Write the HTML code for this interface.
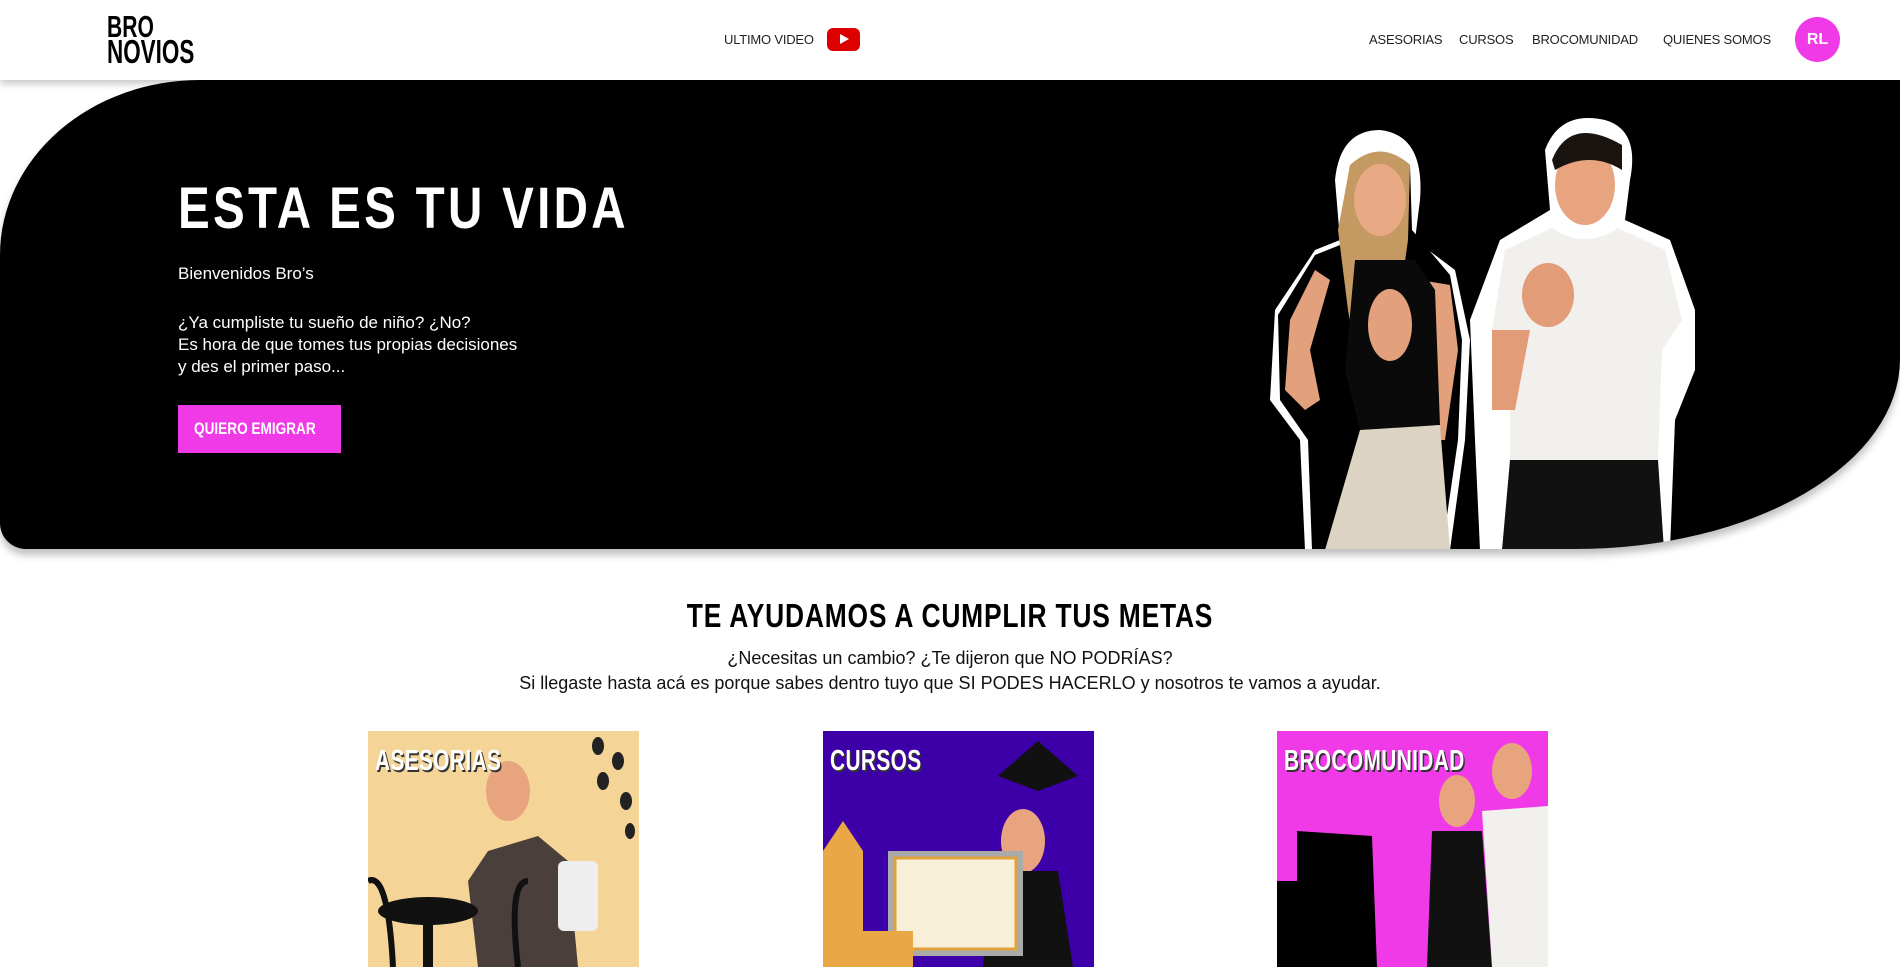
<!DOCTYPE html>
<html><head><meta charset="utf-8"><style>
*{margin:0;padding:0;box-sizing:border-box}
body{width:1900px;height:967px;overflow:hidden;background:#fff;font-family:"Liberation Sans",sans-serif;position:relative}
.hdr{position:absolute;left:0;top:0;width:1900px;height:80px;background:#fff;box-shadow:0 3px 8px rgba(0,0,0,.25);z-index:5}
.nav{position:absolute;top:32px;font-size:13px;color:#222;letter-spacing:-.2px;white-space:nowrap}
.hero{position:absolute;left:0;top:80px;width:1900px;height:469px;background:#000;border-radius:200px 0 325px 26px / 175px 0 190px 26px;box-shadow:0 6px 8px rgba(0,0,0,.25);overflow:hidden}
.cond{font-weight:bold;display:inline-block;transform-origin:left center;white-space:nowrap}
.card{position:absolute;top:731px;width:271px;height:236px;overflow:hidden}
.lbl{position:absolute;left:7px;top:14px;color:#fff;font-weight:bold;font-size:29px;transform:scaleX(.72);transform-origin:left top;text-shadow:2px 2px 0 #333;letter-spacing:.5px;white-space:nowrap}
</style></head><body>
<div class="hdr">
  <div style="position:absolute;left:107px;top:14px;width:110px;line-height:25px;font-weight:900;color:#000">
    <div style="transform:scaleX(.68);transform-origin:left;font-size:31px">BRO</div>
    <div style="transform:scaleX(.68);transform-origin:left;font-size:33px">NOVIOS</div>
  </div>
  <div class="nav" style="left:724px">ULTIMO VIDEO</div>
  <div style="position:absolute;left:827px;top:28px;width:33px;height:23px;background:#d00;border-radius:6px"><div style="position:absolute;left:13px;top:6px;border-left:9px solid #fff;border-top:5.5px solid transparent;border-bottom:5.5px solid transparent"></div></div>
  <div class="nav" style="left:1369px">ASESORIAS</div>
  <div class="nav" style="left:1459px">CURSOS</div>
  <div class="nav" style="left:1532px">BROCOMUNIDAD</div>
  <div class="nav" style="left:1663px">QUIENES SOMOS</div>
  <div style="position:absolute;left:1795px;top:17px;width:45px;height:45px;border-radius:50%;background:#f03ae8;color:#fff;font-weight:bold;font-size:16px;text-align:center;line-height:45px">RL</div>
</div>
<div class="hero">
  <div style="position:absolute;left:178px;top:95px;color:#fff"><span class="cond" style="font-size:58px;letter-spacing:4px;transform:scaleX(.82);font-weight:900">ESTA ES TU VIDA</span></div>
  <div style="position:absolute;left:178px;top:184px;color:#fff;font-size:17px">Bienvenidos Bro’s</div>
  <div style="position:absolute;left:178px;top:232px;color:#fff;font-size:17px;line-height:22px">¿Ya cumpliste tu sueño de niño? ¿No?<br>Es hora de que tomes tus propias decisiones<br>y des el primer paso...</div>
  <div style="position:absolute;left:178px;top:325px;width:163px;height:48px;background:#f03ae8;color:#fff;line-height:48px;padding-left:16px;white-space:nowrap"><span class="cond" style="font-size:17px;transform:scaleX(.8)">QUIERO EMIGRAR</span></div>
  <svg style="position:absolute;left:1230px;top:30px" width="520" height="440" viewBox="0 0 520 440">
    <path d="M75 440 L70 330 L40 290 L45 200 L85 140 L110 130 L105 70 Q110 20 150 20 Q195 25 190 90 L185 130 L225 160 L240 230 L235 330 L220 440Z" fill="#fff"/>
    <path d="M48 205 L85 145 L110 135 L120 60 Q150 28 180 55 L182 120 L220 165 L232 230 L228 330 L212 440 L82 440 L78 330 L50 290Z" fill="#000"/>
    <path d="M120 55 Q150 28 180 55 L178 130 L160 260 L135 300 L118 200 L108 120Z" fill="#c49a62"/>
    <ellipse cx="150" cy="90" rx="26" ry="36" fill="#e8a985"/>
    <path d="M60 210 L85 160 L100 170 L80 240 L90 290 L75 300 L55 280Z" fill="#e3a07d"/>
    <path d="M190 170 L220 175 L228 240 L215 330 L200 330 L205 240Z" fill="#e3a07d"/>
    <path d="M125 150 L185 150 L205 180 L210 315 L130 320 L115 260 Z" fill="#0a0a0a"/>
    <path d="M130 320 L210 315 L220 440 L95 440Z" fill="#ddd3c3"/>
    <ellipse cx="160" cy="215" rx="22" ry="36" fill="#e3a07d"/>
    <path d="M250 440 L245 330 L240 210 L270 130 L320 100 L315 40 Q330 0 375 10 Q410 20 400 70 L395 110 L440 130 L465 200 L465 260 L445 310 L440 440Z" fill="#fff"/>
    <ellipse cx="355" cy="75" rx="30" ry="40" fill="#e8a47f"/>
    <path d="M322 50 Q340 5 392 35 L392 60 Q360 40 325 60Z" fill="#1a1410"/>
    <path d="M275 140 L322 118 Q355 140 388 118 L435 140 L452 210 L432 240 L428 350 L280 350 L280 250 L262 220Z" fill="#f2f0ec"/>
    <path d="M280 350 L428 350 L434 440 L272 440Z" fill="#111"/>
    <path d="M262 220 L300 220 L285 300 L262 300Z" fill="#e39c78"/>
    <ellipse cx="318" cy="185" rx="26" ry="32" fill="#e39c78"/>
  </svg>
</div>
<div style="position:absolute;left:0;top:597px;width:1900px;text-align:center;color:#000"><span class="cond" style="font-size:33px;transform:scaleX(.8);transform-origin:center;letter-spacing:1px;font-weight:900">TE AYUDAMOS A CUMPLIR TUS METAS</span></div>
<div style="position:absolute;left:0;top:646px;width:1900px;text-align:center;color:#111;font-size:18px;line-height:25px">¿Necesitas un cambio? ¿Te dijeron que NO PODRÍAS?<br>Si llegaste hasta acá es porque sabes dentro tuyo que SI PODES HACERLO y nosotros te vamos a ayudar.</div>
<div class="card" style="left:368px;background:#f5d597">
  <svg width="271" height="236" style="position:absolute;left:0;top:0">
    <ellipse cx="140" cy="60" rx="22" ry="30" fill="#e8a47f"/>
    <path d="M120 120 L170 105 L200 130 L210 236 L110 236 L100 150Z" fill="#4a3f3a"/>
    <rect x="190" y="130" width="40" height="70" rx="6" fill="#eee"/>
    <ellipse cx="60" cy="180" rx="50" ry="14" fill="#111"/><rect x="55" y="180" width="10" height="56" fill="#111"/>
    <path d="M0 150 Q20 140 25 236 M160 150 Q140 150 150 236" stroke="#111" stroke-width="6" fill="none"/>
    <g fill="#222"><ellipse cx="230" cy="15" rx="6" ry="9"/><ellipse cx="250" cy="30" rx="6" ry="9"/><ellipse cx="235" cy="50" rx="6" ry="9"/><ellipse cx="258" cy="70" rx="6" ry="9"/><ellipse cx="262" cy="100" rx="5" ry="8"/></g>
  </svg>
  <div class="lbl">ASESORIAS</div></div>
<div class="card" style="left:823px;background:#3d00a8">
  <svg width="271" height="236" style="position:absolute;left:0;top:0">
    <path d="M0 120 L20 90 L40 120 L40 236 L0 236Z" fill="#e9a845"/>
    <ellipse cx="200" cy="110" rx="22" ry="32" fill="#e8a47f"/>
    <path d="M175 45 L215 10 L255 45 L215 60Z" fill="#111"/>
    <path d="M170 140 L235 140 L250 236 L160 236Z" fill="#111"/>
    <rect x="65" y="120" width="135" height="105" fill="#aaa"/><rect x="72" y="127" width="121" height="91" fill="#f7efd8" stroke="#e0a13a" stroke-width="3"/>
    <path d="M0 236 L0 200 L90 200 L90 236Z" fill="#e9a845"/>
  </svg>
  <div class="lbl">CURSOS</div></div>
<div class="card" style="left:1277px;background:#f03ae8">
  <svg width="271" height="236" style="position:absolute;left:0;top:0">
    <path d="M20 100 L95 105 L100 236 L0 236 L0 150 L20 150Z" fill="#000"/>
    <ellipse cx="180" cy="70" rx="18" ry="26" fill="#e8a47f"/>
    <path d="M155 100 L205 100 L215 236 L150 236Z" fill="#111"/>
    <ellipse cx="235" cy="40" rx="20" ry="28" fill="#e8a47f"/>
    <path d="M205 80 L271 75 L271 236 L215 236Z" fill="#f2f0ec"/>
  </svg>
  <div class="lbl">BROCOMUNIDAD</div></div>
</body></html>
